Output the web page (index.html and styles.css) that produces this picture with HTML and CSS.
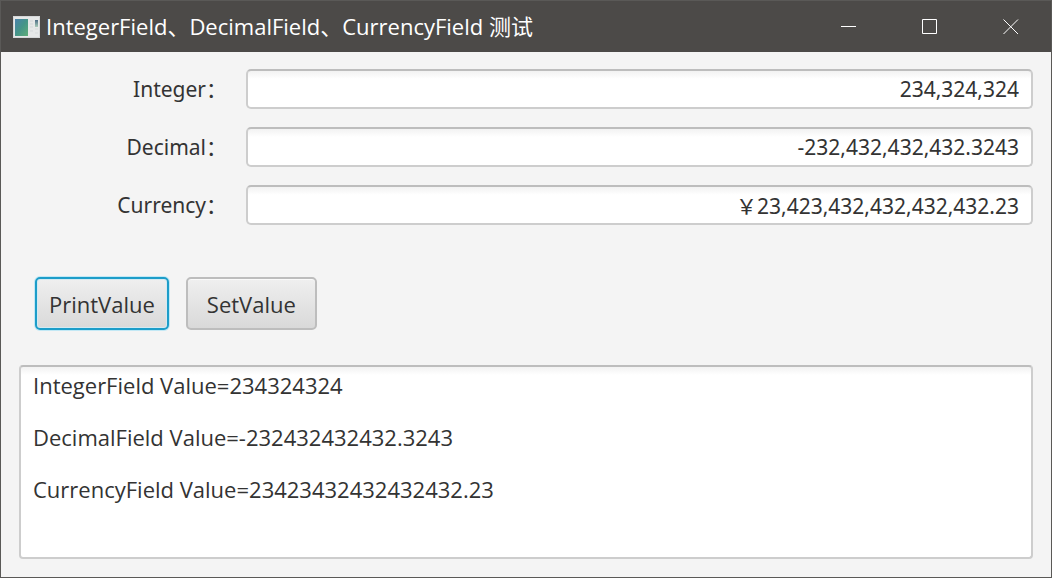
FILE: index.html
```html
<!DOCTYPE html>
<html lang="zh-CN">
<head>
<meta charset="utf-8">
<title>IntegerField、DecimalField、CurrencyField 测试</title>
<link rel="stylesheet" href="styles.css">
</head>
<body>
<div class="window">
  <header class="titlebar">
    <svg class="app-icon" viewBox="0 0 27 22" aria-hidden="true">
      <defs>
        <linearGradient id="pane" x1="0" y1="0" x2="1" y2="1">
          <stop offset="0" stop-color="#4a82ac"/>
          <stop offset=".5" stop-color="#459488"/>
          <stop offset="1" stop-color="#5fad78"/>
        </linearGradient>
        <linearGradient id="bar" x1="0" y1="0" x2="0" y2="1">
          <stop offset="0" stop-color="#4d6d86"/>
          <stop offset="1" stop-color="#a9cbb9"/>
        </linearGradient>
      </defs>
      <rect width="27" height="22" fill="#d5d7d8"/>
      <rect x="1" y="1" width="25" height="20" fill="#e6e8e8"/>
      <rect x="2" y="3" width="13" height="17" fill="url(#pane)"/>
      <path d="M17 5h3M17 8h3M17 11h3M17 15h3" stroke="#d3d7d9"/>
      <rect x="22" y="4" width="3" height="7" fill="url(#bar)"/>
      <path d="M22 13h3M22 17h3" stroke="#d6dadb"/>
    </svg>
    <h1 class="title">IntegerField、DecimalField、CurrencyField 测试</h1>
    <div class="window-controls">
      <button class="control" type="button" aria-label="Minimize"><svg viewBox="0 0 16 16"><path d="M0 7.5h15"/></svg></button>
      <button class="control" type="button" aria-label="Maximize"><svg viewBox="0 0 16 16"><path d="M.5.5h14v14H.5z"/></svg></button>
      <button class="control" type="button" aria-label="Close"><svg viewBox="0 0 16 16"><path d="M.5.5l14.500 14.500M15 .5L.5 15"/></svg></button>
    </div>
  </header>
  <main class="content">
    <form class="form">
      <label class="label" for="integer">Integer：</label>
      <input class="field" id="integer" type="text" value="234,324,324">
      <label class="label" for="decimal">Decimal：</label>
      <input class="field" id="decimal" type="text" value="-232,432,432,432.3243">
      <label class="label" for="currency">Currency：</label>
      <input class="field" id="currency" type="text" value="￥23,423,432,432,432,432.23">
    </form>
    <div class="actions">
      <button class="button button-focused" type="button">PrintValue</button>
      <button class="button" type="button">SetValue</button>
    </div>
    <textarea class="output" aria-label="Output">IntegerField Value=234324324

DecimalField Value=-232432432432.3243

CurrencyField Value=23423432432432432.23
</textarea>
  </main>
</div>
</body>
</html>
```

FILE: styles.css
```css
* {
  box-sizing: border-box;
}

body {
  margin: 0;
  color: #333;
  font-family: "Open Sans", "Noto Sans CJK SC", sans-serif;
  font-size: 22px;
  line-height: 26px;
}

button,
input,
textarea {
  margin: 0;
  color: inherit;
  font: inherit;
}

.window {
  display: flex;
  flex-direction: column;
  min-height: 100vh;
  border: 1px solid #5a5957;
  background: #f4f4f4;
}

.titlebar {
  display: flex;
  align-items: center;
  height: 51px;
  padding-left: 12px;
  background: #4c4a48;
  color: #fff;
}

.app-icon {
  width: 27px;
  height: 22px;
  flex: none;
}

.title {
  flex: 1;
  margin: 0 0 0 6px;
  padding-bottom: 2px;
  font-size: 22px;
  font-weight: 400;
  white-space: nowrap;
}

.window-controls {
  display: flex;
}

.control {
  display: grid;
  place-items: center;
  width: 81px;
  height: 51px;
  padding: 0;
  border: 0;
  background: none;
}

.control svg {
  width: 16px;
  height: 16px;
  fill: none;
  stroke: #fff;
}

.content {
  display: flex;
  flex: 1;
  flex-direction: column;
  padding: 17px 18px 18px;
}

.form {
  display: grid;
  grid-template-columns: 208px 1fr;
  column-gap: 19px;
  row-gap: 18px;
  align-items: center;
}

.label {
  font-family: "Noto Sans", "Noto Sans CJK SC", sans-serif;
  font-size: 21px;
  text-align: right;
}

.field {
  width: 100%;
  height: 40px;
  padding: 0 12px;
  border: 2px solid #cdcdcd;
  border-top-color: #bdbdbd;
  border-radius: 5px;
  background: linear-gradient(#f2f2f2, #fff 8px);
  font-family: "Noto Sans", "Noto Sans CJK SC", sans-serif;
  font-size: 21px;
  text-align: right;
}

.actions {
  display: flex;
  gap: 17px;
  padding: 52px 16px 35px;
}

.button {
  height: 53px;
  padding: 0 19px;
  border: 2px solid #bdbdbd;
  border-radius: 5px;
  background: linear-gradient(#efefef, #d9d9d9);
  box-shadow: inset 0 1px #fafafa;
}

.button-focused {
  padding: 0 12px;
  border-color: #1c9dc9;
  box-shadow: 0 0 0 1px #c2e8f5, inset 0 0 0 1px #d3eaf2;
}

.output {
  display: block;
  flex: 1;
  width: 100%;
  min-height: 120px;
  padding: 5px 12px;
  border: 2px solid #cdcdcd;
  border-top-color: #bdbdbd;
  border-radius: 4px;
  background: linear-gradient(#f2f2f2, #fff 8px);
  resize: none;
}
```
